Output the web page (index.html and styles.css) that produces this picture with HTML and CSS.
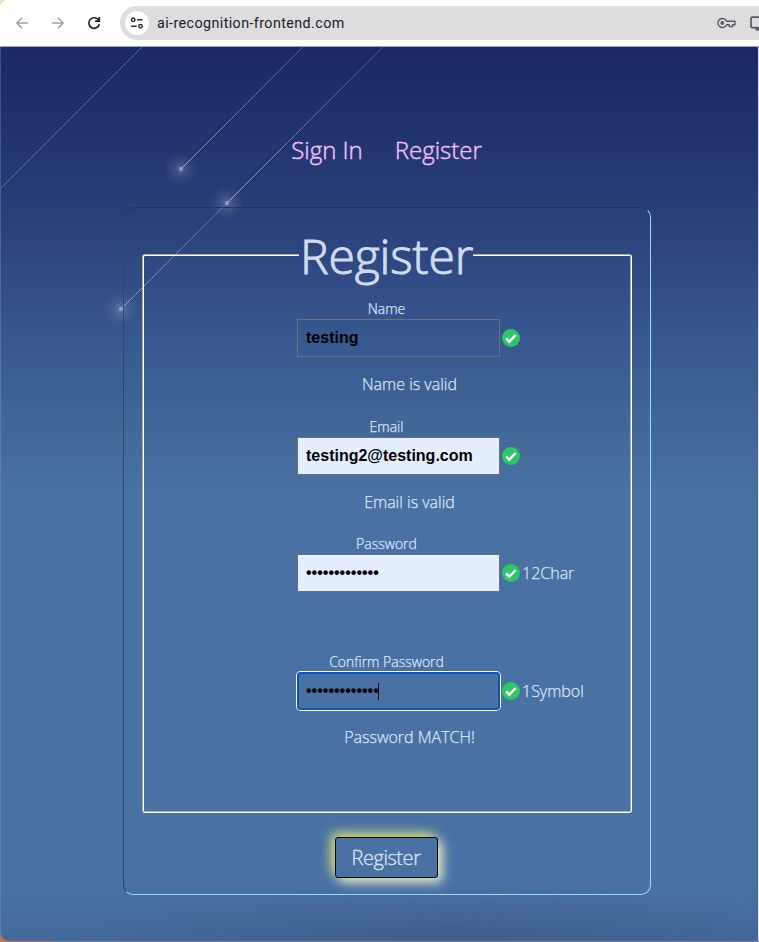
FILE: index.html
```html
<!DOCTYPE html>
<html lang="en">
<head>
<meta charset="utf-8">
<title>Register</title>
<link rel="stylesheet" href="styles.css">
</head>
<body>
<svg class="defs" width="0" height="0">
  <symbol id="check" viewBox="0 0 18 18"><circle cx="9" cy="9" r="9" fill="#2dc766"/><path d="M4.2 9.5l3.1 3.1 6.4-6.6" fill="none" stroke="#fff" stroke-width="2.5"/></symbol>
</svg>
<header class="toolbar">
  <svg class="nav-icon dim" viewBox="0 0 14 14"><path d="M13 7H2M7 1.8L1.8 7L7 12.2"/></svg>
  <svg class="nav-icon dim" viewBox="0 0 14 14"><path d="M1 7H12M7 1.8L12.2 7L7 12.2"/></svg>
  <svg class="nav-icon" viewBox="0 0 14 14"><path d="M11.6 4.2A5.3 5.3 0 1 0 12.3 8.2M12.3 1V5.2H8"/></svg>
  <div class="address">
    <span class="site"><svg width="14" height="12" viewBox="0 0 14 12"><g fill="none" stroke="#303134" stroke-width="1.5"><circle cx="3.2" cy="2.7" r="1.7"/><path d="M7 2.7h5.5M1.2 9.2h5.5"/><circle cx="10.5" cy="9.2" r="1.7"/></g></svg></span>
    <span class="url">ai-recognition-frontend.com</span>
    <svg class="key" viewBox="0 0 19 12"><g fill="none" stroke="#5b5b5f" stroke-width="1.4"><path d="M9.6 4.3A4.5 4.5 0 1 0 9.6 7.7H12.4V9.6H15.6V7.7H17.9V4.3Z"/></g><circle cx="5.3" cy="6" r="1.9" fill="#5b5b5f"/></svg>
    <svg class="screen" viewBox="0 0 18 16"><path d="M17 1.2H2.2Q1 1.2 1 2.4V10.4Q1 11.6 2.2 11.6H17" fill="none" stroke="#5b5b5f" stroke-width="1.7"/><path d="M5.5 12h8v2.6h-8z" fill="#5b5b5f"/></svg>
  </div>
</header>
<main class="page">
  <svg class="meteors" viewBox="0 0 758 895">
    <defs>
      <radialGradient id="glow"><stop offset="0" stop-color="#fff" stop-opacity=".2"/><stop offset=".5" stop-color="#fff" stop-opacity=".07"/><stop offset="1" stop-color="#fff" stop-opacity="0"/></radialGradient>
      <linearGradient id="b" gradientUnits="userSpaceOnUse" x1="181" y1="122" x2="303" y2="0"><stop stop-color="#a4b4d8" stop-opacity=".8"/><stop offset="1" stop-color="#8794bd" stop-opacity=".5"/></linearGradient>
      <linearGradient id="c" gradientUnits="userSpaceOnUse" x1="227" y1="156" x2="383" y2="0"><stop stop-color="#a4b4d8" stop-opacity=".9"/><stop offset="1" stop-color="#7784b3" stop-opacity=".45"/></linearGradient>
      <linearGradient id="d" gradientUnits="userSpaceOnUse" x1="121" y1="262" x2="227" y2="156"><stop stop-color="#a4b4d8" stop-opacity=".8"/><stop offset="1" stop-color="#8fa0c8" stop-opacity=".45"/></linearGradient>
    </defs>
    <path d="M0 142L142 0" stroke="#8799c5" stroke-opacity=".55"/>
    <path d="M181 122L303 0" stroke="url(#b)"/>
    <path d="M227 156L383 0" stroke="url(#c)"/>
    <path d="M121 262L227 156" stroke="url(#d)"/>
    <g fill="url(#glow)"><circle cx="181" cy="122" r="17"/><circle cx="227" cy="156" r="17"/><circle cx="121" cy="262" r="17"/></g>
    <g fill="#93a6cf" fill-opacity=".8"><circle cx="181" cy="122" r="2.2"/><circle cx="227" cy="156" r="2.2"/><circle cx="121" cy="262" r="2.2"/></g>
  </svg>
  <nav class="links"><a>Sign In</a><a>Register</a></nav>
  <section class="card">
    <fieldset class="form">
      <legend>Register</legend>
      <div class="field"><label>Name</label>
        <div class="row"><input type="text" value="testing"><svg class="check"><use href="#check"/></svg></div>
        <p>Name is valid</p></div>
      <div class="field"><label>Email</label>
        <div class="row"><input class="filled" type="text" value="testing2@testing.com"><svg class="check"><use href="#check"/></svg></div>
        <p>Email is valid</p></div>
      <div class="field"><label>Password</label>
        <div class="row"><input class="filled" type="password" value="1234567890123"><svg class="check"><use href="#check"/></svg><span>12Char</span></div>
        <p></p></div>
      <div class="field"><label>Confirm Password</label>
        <div class="row"><input class="focused" type="password" value="1234567890123"><i class="caret"></i><svg class="check"><use href="#check"/></svg><span>1Symbol</span></div>
        <p>Password MATCH!</p></div>
    </fieldset>
    <button class="submit">Register</button>
  </section>
</main>
</body>
</html>
```
FILE: styles.css
```css
* { box-sizing: border-box; }
body { margin: 0; width: 759px; height: 942px; overflow: hidden; background: linear-gradient(90deg, #b87850 0 45px, #76809a 60px); font-family: "Open Sans", sans-serif; font-weight: 300; }
.defs { position: absolute; }
.toolbar { height: 47px; display: flex; align-items: center; background: radial-gradient(circle at 9px 9px, #fff 9px, #fbd9cb 10px) 0 0 / 9px 9px no-repeat, #fff; padding-left: 15px; border-bottom: 1px solid #9ca3bc; }
.nav-icon { width: 14px; height: 14px; margin-right: 22px; flex: none; fill: none; stroke: #202124; stroke-width: 1.7; }
.nav-icon.dim { stroke: #a0a0a3; stroke-width: 1.4; }
.address { flex: 1; height: 34px; margin-left: -3px; border-radius: 17px 0 0 17px; background: #dddde0; display: flex; align-items: center; padding-left: 5px; overflow: hidden; }
.site { width: 24px; height: 24px; border-radius: 50%; background: #fff; display: flex; align-items: center; justify-content: center; flex: none; }
.url { font: 400 14.3px Roboto, sans-serif; color: #202124; margin-left: 8px; letter-spacing: .41px; flex: 1; }
.key { width: 19px; height: 12px; flex: none; }
.screen { width: 18px; height: 16px; flex: none; margin: 1px -9px 0 14px; }
.page { position: relative; width: 758px; height: 894px; border-left: 1px solid rgba(150,175,215,.3); border-radius: 0 0 0 9px; overflow: hidden; background: radial-gradient(ellipse 400px 55px at 450px 100%, rgba(55,80,120,.45), transparent), linear-gradient(#1a2866 0, #213470 90px, #2c437c 190px, #375890 290px, #426898 385px, #4971a3 445px, #4971a3 840px, #446a9b 100%); display: flex; flex-direction: column; align-items: center; box-shadow: 1px 0 #d9dce4; }
.meteors { position: absolute; left: -1px; top: 0; width: 758px; height: 895px; fill: none; }
.links { position: relative; display: flex; gap: 32px; font-size: 24px; line-height: 34px; color: #f3c2fb; margin: 86px 0 0 14px; -webkit-text-stroke: .4px; }
.card { position: relative; width: 528px; height: 688px; margin: 40px 0 0 15px; border: 1px solid #92dcff; border-top-color: #203561; border-left-color: #294773; border-radius: 10px; display: flex; flex-direction: column; align-items: center; }
.form { width: 490px; height: 583px; margin: 22px 0 0; border: 2px groove #fff; border-radius: 3px; padding: 0 0 0 153px; color: #dbe5f8; -webkit-text-stroke: .25px; }
legend { height: 50px; line-height: 52px; font-size: 48px; padding: 0 0 0 1px; margin-left: 2px; letter-spacing: -.1px; color: #d0daee; -webkit-text-stroke: 1px; }
.field { height: 117.7px; width: 320px; }
.field:nth-of-type(1) { margin-top: 19px; }
label { display: block; width: 179px; text-align: center; font-size: 14px; line-height: 19px; height: 20px; }
.row { display: flex; align-items: center; height: 38px; position: relative; font-size: 16px; }
.row span { margin-left: -1px; }
input { width: 203px; height: 38px; flex: none; border: 1px solid #6f7178; padding: 0 8px; background: transparent; font: bold 16px "Liberation Sans", sans-serif; color: #000; margin: 0; outline: 0; -webkit-text-stroke: 0; }
.filled { background: #e5eeff; }
.focused { border: 2px solid #0d55bd; border-radius: 4px; padding: 0 7px; box-shadow: 0 0 0 1px #fff; }
.caret { position: absolute; left: 81px; top: 11px; width: 1px; height: 17px; background: #000; }
.check { width: 18px; height: 18px; margin: 0 3px 0 2px; flex: none; }
.field p { width: 225px; height: 20px; line-height: 20px; text-align: center; margin: 17px 0 0; font-size: 16px; }
.submit { width: 103px; height: 41px; margin: 24px 2px 0 0; border: 1px solid #000; border-radius: 3px; background: #4971a3; color: #d9e3f8; font: 300 20px "Open Sans", sans-serif; letter-spacing: -.45px; -webkit-text-stroke: .3px; padding: 0 0 1px; box-shadow: -4px -4px 12px #d0dc78, 4px 4px 12px #f0f4dc; }
```
